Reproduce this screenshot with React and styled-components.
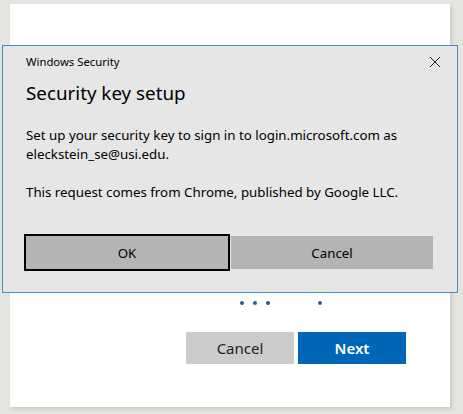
import React from "react";
import styled, { createGlobalStyle } from "styled-components";

const GlobalStyle = createGlobalStyle`
  html, body {
    margin: 0;
    padding: 0;
    background: #e4e4e0;
  }
  body {
    font-family: "Noto Sans", "Open Sans", sans-serif;
    color: #000;
  }
`;

const Page = styled.div`
  position: relative;
  width: 463px;
  height: 414px;
  overflow: hidden;
  background: #e4e4e0;
`;

const Card = styled.div`
  margin: 4px 0 0 10px;
  width: 440px;
  height: 403px;
  background: #fff;
  box-shadow: 2px 2px 4px rgba(0, 0, 0, 0.12);
  display: flex;
  flex-direction: column;
  align-items: flex-start;
`;

const Dots = styled.div`
  margin-top: 297px;
  margin-left: 230px;
  display: flex;
  align-items: center;
  gap: 9px;
  height: 4px;
`;

const Dot = styled.span`
  width: 4px;
  height: 4px;
  border-radius: 50%;
  background: #1f5f99;
  margin-left: ${(p) => (p.$gap ? "39px" : "0")};
`;

const Actions = styled.div`
  margin-top: 27px;
  margin-left: 176px;
  display: flex;
  gap: 4px;
`;

const PageButton = styled.button`
  width: 108px;
  height: 32px;
  border: none;
  padding: 0;
  font-family: "Noto Sans", "Open Sans", sans-serif;
  font-size: 15px;
  background: ${(p) => (p.$primary ? "#0067b8" : "#cccccc")};
  color: ${(p) => (p.$primary ? "#fff" : "#222")};
  font-weight: ${(p) => (p.$primary ? 600 : 400)};
`;

const Dialog = styled.div`
  position: absolute;
  left: 2px;
  top: 45px;
  width: 454px;
  height: 246px;
  background: #e6e6e6;
  border: 1px solid #3c8ec8;
`;

const TitleBar = styled.div`
  display: flex;
  justify-content: space-between;
  align-items: center;
  height: 31px;
  padding: 0 16px 1px 23px;
  font-size: 11.3px;
`;

const CloseIcon = styled.svg`
  width: 12px;
  height: 12px;
`;

const Body = styled.div`
  padding: 0 24px 0 23px;
`;

const Heading = styled.h1`
  margin: 0;
  font-size: 18.8px;
  font-weight: 400;
  line-height: 30px;
`;

const Text = styled.p`
  margin: 18px 0 0;
  font-size: 13.3px;
  line-height: 19px;
  & + & {
    margin-top: 19px;
  }
`;

const ButtonRow = styled.div`
  display: flex;
  margin-top: 34px;
  gap: 3px;
`;

const DialogButton = styled.button`
  flex: 1;
  height: 33px;
  padding: 0;
  border: none;
  background: #b4b4b4;
  font-family: "Noto Sans", "Open Sans", sans-serif;
  font-size: 13.3px;
  color: #000;
  outline: ${(p) => (p.$focused ? "2px solid #000" : "none")};
`;

export default function App() {
  return (
    <Page>
      <GlobalStyle />
      <Card>
        <Dots>
          <Dot />
          <Dot />
          <Dot />
          <Dot $gap />
        </Dots>
        <Actions>
          <PageButton>Cancel</PageButton>
          <PageButton $primary>Next</PageButton>
        </Actions>
      </Card>
      <Dialog>
        <TitleBar>
          <span>Windows Security</span>
          <CloseIcon viewBox="0 0 12 12">
            <path d="M1 1L11 11M11 1L1 11" stroke="#222" strokeWidth="1" fill="none" />
          </CloseIcon>
        </TitleBar>
        <Body>
          <Heading>Security key setup</Heading>
          <Text>
            Set up your security key to sign in to login.microsoft.com as
            <br />
            eleckstein_se@usi.edu.
          </Text>
          <Text>This request comes from Chrome, published by Google LLC.</Text>
          <ButtonRow>
            <DialogButton $focused>OK</DialogButton>
            <DialogButton>Cancel</DialogButton>
          </ButtonRow>
        </Body>
      </Dialog>
    </Page>
  );
}
